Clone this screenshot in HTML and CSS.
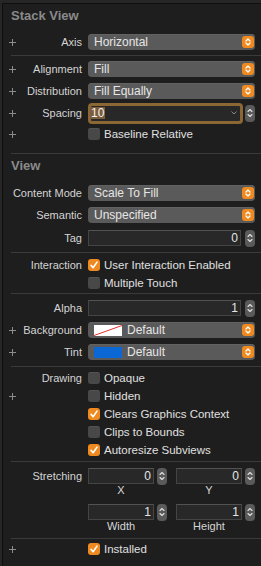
FILE: index.html
```html
<!DOCTYPE html>
<html lang="en">
<head>
    <meta charset="UTF-8">
    <meta name="viewport" content="width=device-width, initial-scale=1.0">
    <title>Attributes Inspector</title>
    <link rel="stylesheet" href="styles.css">
</head>
<body>
<div class="panel">
    <div class="section-title">Stack View</div>

    <div class="row">
        <div class="key"><svg class="plus" width="7" height="7" viewBox="0 0 7 7"><path d="M3.5 0v7M0 3.5h7" stroke="#8c8c8c"/></svg><span class="label">Axis</span></div>
        <div class="popup"><span>Horizontal</span><span class="pop-btn"><svg width="12" height="12" viewBox="0 0 12 12"><path d="M4 5l2-2 2 2M4 7l2 2 2-2" fill="none" stroke="#fff" stroke-width="1.3" stroke-linecap="round" stroke-linejoin="round"/></svg></span></div>
    </div>
    <div class="sep sep-a"></div>
    <div class="row">
        <div class="key"><svg class="plus" width="7" height="7" viewBox="0 0 7 7"><path d="M3.5 0v7M0 3.5h7" stroke="#8c8c8c"/></svg><span class="label">Alignment</span></div>
        <div class="popup"><span>Fill</span><span class="pop-btn"><svg width="12" height="12" viewBox="0 0 12 12"><path d="M4 5l2-2 2 2M4 7l2 2 2-2" fill="none" stroke="#fff" stroke-width="1.3" stroke-linecap="round" stroke-linejoin="round"/></svg></span></div>
    </div>
    <div class="row">
        <div class="key"><svg class="plus" width="7" height="7" viewBox="0 0 7 7"><path d="M3.5 0v7M0 3.5h7" stroke="#8c8c8c"/></svg><span class="label">Distribution</span></div>
        <div class="popup"><span>Fill Equally</span><span class="pop-btn"><svg width="12" height="12" viewBox="0 0 12 12"><path d="M4 5l2-2 2 2M4 7l2 2 2-2" fill="none" stroke="#fff" stroke-width="1.3" stroke-linecap="round" stroke-linejoin="round"/></svg></span></div>
    </div>
    <div class="row">
        <div class="key"><svg class="plus" width="7" height="7" viewBox="0 0 7 7"><path d="M3.5 0v7M0 3.5h7" stroke="#8c8c8c"/></svg><span class="label">Spacing</span></div>
        <div class="numeric focused">
            <div class="field focus"><span class="sel">10</span><svg class="combo" width="6" height="4" viewBox="0 0 6 4"><path d="M0.5 0.5l2.5 2.5 2.5-2.5" fill="none" stroke="#8a8a8a"/></svg></div>
            <span class="stepper"><svg width="10" height="16" viewBox="0 0 10 16"><path d="M3 6.5l2-2 2 2M3 9.5l2 2 2-2" fill="none" stroke="#e0e0e0" stroke-width="1.1" stroke-linecap="round" stroke-linejoin="round"/></svg></span>
        </div>
    </div>
    <div class="row h20">
        <div class="key"><svg class="plus" width="7" height="7" viewBox="0 0 7 7"><path d="M3.5 0v7M0 3.5h7" stroke="#8c8c8c"/></svg></div>
        <div class="option"><span class="check"></span>Baseline Relative</div>
    </div>
    <div class="sep sep-b"></div>

    <div class="section-title view">View</div>

    <div class="row">
        <div class="key"><span class="label">Content Mode</span></div>
        <div class="popup"><span>Scale To Fill</span><span class="pop-btn"><svg width="12" height="12" viewBox="0 0 12 12"><path d="M4 5l2-2 2 2M4 7l2 2 2-2" fill="none" stroke="#fff" stroke-width="1.3" stroke-linecap="round" stroke-linejoin="round"/></svg></span></div>
    </div>
    <div class="row">
        <div class="key"><span class="label">Semantic</span></div>
        <div class="popup"><span>Unspecified</span><span class="pop-btn"><svg width="12" height="12" viewBox="0 0 12 12"><path d="M4 5l2-2 2 2M4 7l2 2 2-2" fill="none" stroke="#fff" stroke-width="1.3" stroke-linecap="round" stroke-linejoin="round"/></svg></span></div>
    </div>
    <div class="row tag-row">
        <div class="key"><span class="label">Tag</span></div>
        <div class="numeric">
            <div class="field">0</div>
            <span class="stepper"><svg width="10" height="16" viewBox="0 0 10 16"><path d="M3 6.5l2-2 2 2M3 9.5l2 2 2-2" fill="none" stroke="#e0e0e0" stroke-width="1.1" stroke-linecap="round" stroke-linejoin="round"/></svg></span>
        </div>
    </div>
    <div class="sep sep-c"></div>

    <div class="row check-row">
        <div class="key"><span class="label">Interaction</span></div>
        <div class="option"><span class="check on"><svg width="12" height="12" viewBox="0 0 12 12"><path d="M3 6.3l2.1 2.4 3.9-5.6" fill="none" stroke="#fff" stroke-width="1.6" stroke-linecap="round" stroke-linejoin="round"/></svg></span>User Interaction Enabled</div>
    </div>
    <div class="row check-row">
        <div class="key"></div>
        <div class="option"><span class="check"></span>Multiple Touch</div>
    </div>
    <div class="sep sep-d"></div>

    <div class="row">
        <div class="key"><span class="label">Alpha</span></div>
        <div class="numeric">
            <div class="field">1</div>
            <span class="stepper"><svg width="10" height="16" viewBox="0 0 10 16"><path d="M3 6.5l2-2 2 2M3 9.5l2 2 2-2" fill="none" stroke="#e0e0e0" stroke-width="1.1" stroke-linecap="round" stroke-linejoin="round"/></svg></span>
        </div>
    </div>
    <div class="row">
        <div class="key"><svg class="plus" width="7" height="7" viewBox="0 0 7 7"><path d="M3.5 0v7M0 3.5h7" stroke="#8c8c8c"/></svg><span class="label">Background</span></div>
        <div class="popup"><svg class="swatch" width="28" height="11" viewBox="0 0 28 11"><rect width="28" height="11" fill="#fff"/><path d="M0 10.5L28 0.5" stroke="#e2312b" stroke-width="1"/></svg><span>Default</span><span class="pop-btn"><svg width="12" height="12" viewBox="0 0 12 12"><path d="M4 5l2-2 2 2M4 7l2 2 2-2" fill="none" stroke="#fff" stroke-width="1.3" stroke-linecap="round" stroke-linejoin="round"/></svg></span></div>
    </div>
    <div class="row">
        <div class="key"><svg class="plus" width="7" height="7" viewBox="0 0 7 7"><path d="M3.5 0v7M0 3.5h7" stroke="#8c8c8c"/></svg><span class="label">Tint</span></div>
        <div class="popup"><svg class="swatch" width="28" height="11" viewBox="0 0 28 11"><rect width="28" height="11" fill="#0b67d4"/></svg><span>Default</span><span class="pop-btn"><svg width="12" height="12" viewBox="0 0 12 12"><path d="M4 5l2-2 2 2M4 7l2 2 2-2" fill="none" stroke="#fff" stroke-width="1.3" stroke-linecap="round" stroke-linejoin="round"/></svg></span></div>
    </div>
    <div class="sep sep-e"></div>

    <div class="row check-row">
        <div class="key"><span class="label">Drawing</span></div>
        <div class="option"><span class="check"></span>Opaque</div>
    </div>
    <div class="row check-row">
        <div class="key"><svg class="plus" width="7" height="7" viewBox="0 0 7 7"><path d="M3.5 0v7M0 3.5h7" stroke="#8c8c8c"/></svg></div>
        <div class="option"><span class="check"></span>Hidden</div>
    </div>
    <div class="row check-row">
        <div class="key"></div>
        <div class="option"><span class="check on"><svg width="12" height="12" viewBox="0 0 12 12"><path d="M3 6.3l2.1 2.4 3.9-5.6" fill="none" stroke="#fff" stroke-width="1.6" stroke-linecap="round" stroke-linejoin="round"/></svg></span>Clears Graphics Context</div>
    </div>
    <div class="row check-row">
        <div class="key"></div>
        <div class="option"><span class="check"></span>Clips to Bounds</div>
    </div>
    <div class="row check-row">
        <div class="key"></div>
        <div class="option"><span class="check on"><svg width="12" height="12" viewBox="0 0 12 12"><path d="M3 6.3l2.1 2.4 3.9-5.6" fill="none" stroke="#fff" stroke-width="1.6" stroke-linecap="round" stroke-linejoin="round"/></svg></span>Autoresize Subviews</div>
    </div>
    <div class="sep sep-f"></div>

    <div class="stretch">
        <div class="key"><span class="label">Stretching</span></div>
        <div class="pair">
            <div class="cell">
                <div class="line"><div class="field">0</div><span class="stepper"><svg width="10" height="16" viewBox="0 0 10 16"><path d="M3 6.5l2-2 2 2M3 9.5l2 2 2-2" fill="none" stroke="#e0e0e0" stroke-width="1.1" stroke-linecap="round" stroke-linejoin="round"/></svg></span></div>
                <div class="caption">X</div>
            </div>
            <div class="cell">
                <div class="line"><div class="field">0</div><span class="stepper"><svg width="10" height="16" viewBox="0 0 10 16"><path d="M3 6.5l2-2 2 2M3 9.5l2 2 2-2" fill="none" stroke="#e0e0e0" stroke-width="1.1" stroke-linecap="round" stroke-linejoin="round"/></svg></span></div>
                <div class="caption">Y</div>
            </div>
        </div>
    </div>
    <div class="stretch second">
        <div class="key"></div>
        <div class="pair">
            <div class="cell">
                <div class="line"><div class="field">1</div><span class="stepper"><svg width="10" height="16" viewBox="0 0 10 16"><path d="M3 6.5l2-2 2 2M3 9.5l2 2 2-2" fill="none" stroke="#e0e0e0" stroke-width="1.1" stroke-linecap="round" stroke-linejoin="round"/></svg></span></div>
                <div class="caption">Width</div>
            </div>
            <div class="cell">
                <div class="line"><div class="field">1</div><span class="stepper"><svg width="10" height="16" viewBox="0 0 10 16"><path d="M3 6.5l2-2 2 2M3 9.5l2 2 2-2" fill="none" stroke="#e0e0e0" stroke-width="1.1" stroke-linecap="round" stroke-linejoin="round"/></svg></span></div>
                <div class="caption">Height</div>
            </div>
        </div>
    </div>
    <div class="sep sep-g"></div>

    <div class="row h20">
        <div class="key"><svg class="plus" width="7" height="7" viewBox="0 0 7 7"><path d="M3.5 0v7M0 3.5h7" stroke="#8c8c8c"/></svg></div>
        <div class="option"><span class="check on"><svg width="12" height="12" viewBox="0 0 12 12"><path d="M3 6.3l2.1 2.4 3.9-5.6" fill="none" stroke="#fff" stroke-width="1.6" stroke-linecap="round" stroke-linejoin="round"/></svg></span>Installed</div>
    </div>
</div>
</body>
</html>
```

FILE: styles.css
```css
body {
    margin: 0;
    background-color: #262626;
    font-family: 'Liberation Sans', Arial, sans-serif;
    font-size: 11px;
    color: #d6d6d6;
}
.panel {
    margin: 3px 0 0 2px;
    height: 562px;
    border-top: 1px solid #0f0f0f;
    border-left: 1px solid #0f0f0f;
    background-color: #1e1e1e;
    overflow: hidden;
}
.section-title {
    height: 27px;
    line-height: 24px;
    padding-left: 8px;
    font-size: 13px;
    font-weight: bold;
    color: #8a8a8a;
}
.section-title.view {
    height: 28px;
}
.sep {
    height: 1px;
    margin-left: 8px;
    background-color: #3a3a3a;
}
.sep-a { margin-top: 2px; margin-bottom: 2px; }
.sep-b { margin-top: 9px; }
.sep-c { margin-top: 3px; margin-bottom: 3px; }
.sep-d { margin-top: 1px; margin-bottom: 3px; }
.sep-e { margin-top: 3px; margin-bottom: 2px; }
.sep-f { margin-top: 2px; }
.sep-g { margin-top: 6px; }

.row {
    display: grid;
    grid-template-columns: 79px 167px;
    column-gap: 6px;
    align-items: center;
    height: 22px;
}
.row.h20 {
    height: 20px;
}
.row.check-row {
    height: 18px;
}
.row.tag-row {
    margin-top: 1px;
}
.key {
    display: flex;
    align-items: center;
    height: 100%;
    padding-left: 6px;
}
.plus {
    display: block;
    flex: none;
}
.label {
    margin-left: auto;
    white-space: nowrap;
    color: #d4d4d4;
}

.popup {
    display: flex;
    align-items: center;
    height: 16px;
    padding: 0 1px 0 6px;
    border-radius: 4px;
    background-color: #5a5a5a;
    box-shadow: inset 0 0.5px 0 #6a6a6a;
    font-size: 12px;
    color: #e6e6e6;
    white-space: nowrap;
}
.pop-btn {
    display: flex;
    margin-left: auto;
    width: 12px;
    height: 12px;
    border-radius: 3px;
    background-color: #ee8a1f;
}
.swatch {
    display: block;
    margin-right: 5px;
}

.numeric {
    display: flex;
    align-items: center;
    gap: 4px;
}
.numeric.focused {
    gap: 2px;
}
.field {
    flex: 1;
    box-sizing: border-box;
    height: 16px;
    padding-right: 2px;
    border: 1px solid #444;
    border-top-color: #525252;
    background-color: #282828;
    font-size: 12px;
    line-height: 14px;
    text-align: right;
    color: #e6e6e6;
}
.field.focus {
    display: flex;
    align-items: center;
    height: 21px;
    padding: 0;
    border: 3px solid #8b6734;
    border-radius: 4px;
    text-align: left;
}
.sel {
    padding: 0 1px;
    margin-left: -1px;
    line-height: 12px;
    background-color: #7b5d3b;
    color: #f2f2f2;
}
.combo {
    display: block;
    margin: 0 3px 0 auto;
}
.stepper {
    display: flex;
    align-items: center;
    flex: none;
    width: 10px;
    height: 17px;
    border-radius: 4px;
    background-color: #5a5a5a;
}

.option {
    display: flex;
    align-items: center;
    font-size: 11.5px;
    color: #e0e0e0;
    white-space: nowrap;
}
.check {
    display: flex;
    flex: none;
    box-sizing: border-box;
    width: 12px;
    height: 12px;
    margin-right: 4px;
    border-radius: 3px;
    background-color: #484848;
    box-shadow: inset 0 0.5px 0 #5e5e5e;
}
.check.on {
    background-color: #ee8a1f;
    box-shadow: none;
}

.stretch {
    display: grid;
    grid-template-columns: 79px 167px;
    column-gap: 6px;
    align-items: start;
    padding-top: 6px;
}
.stretch.second {
    padding-top: 8px;
}
.stretch .key {
    height: 16px;
}
.pair {
    display: grid;
    grid-template-columns: 79px 79px;
    column-gap: 9px;
}
.line {
    display: flex;
    align-items: center;
    gap: 3px;
    height: 16px;
}
.caption {
    width: 66px;
    line-height: 12px;
    text-align: center;
    color: #d6d6d6;
}
```
